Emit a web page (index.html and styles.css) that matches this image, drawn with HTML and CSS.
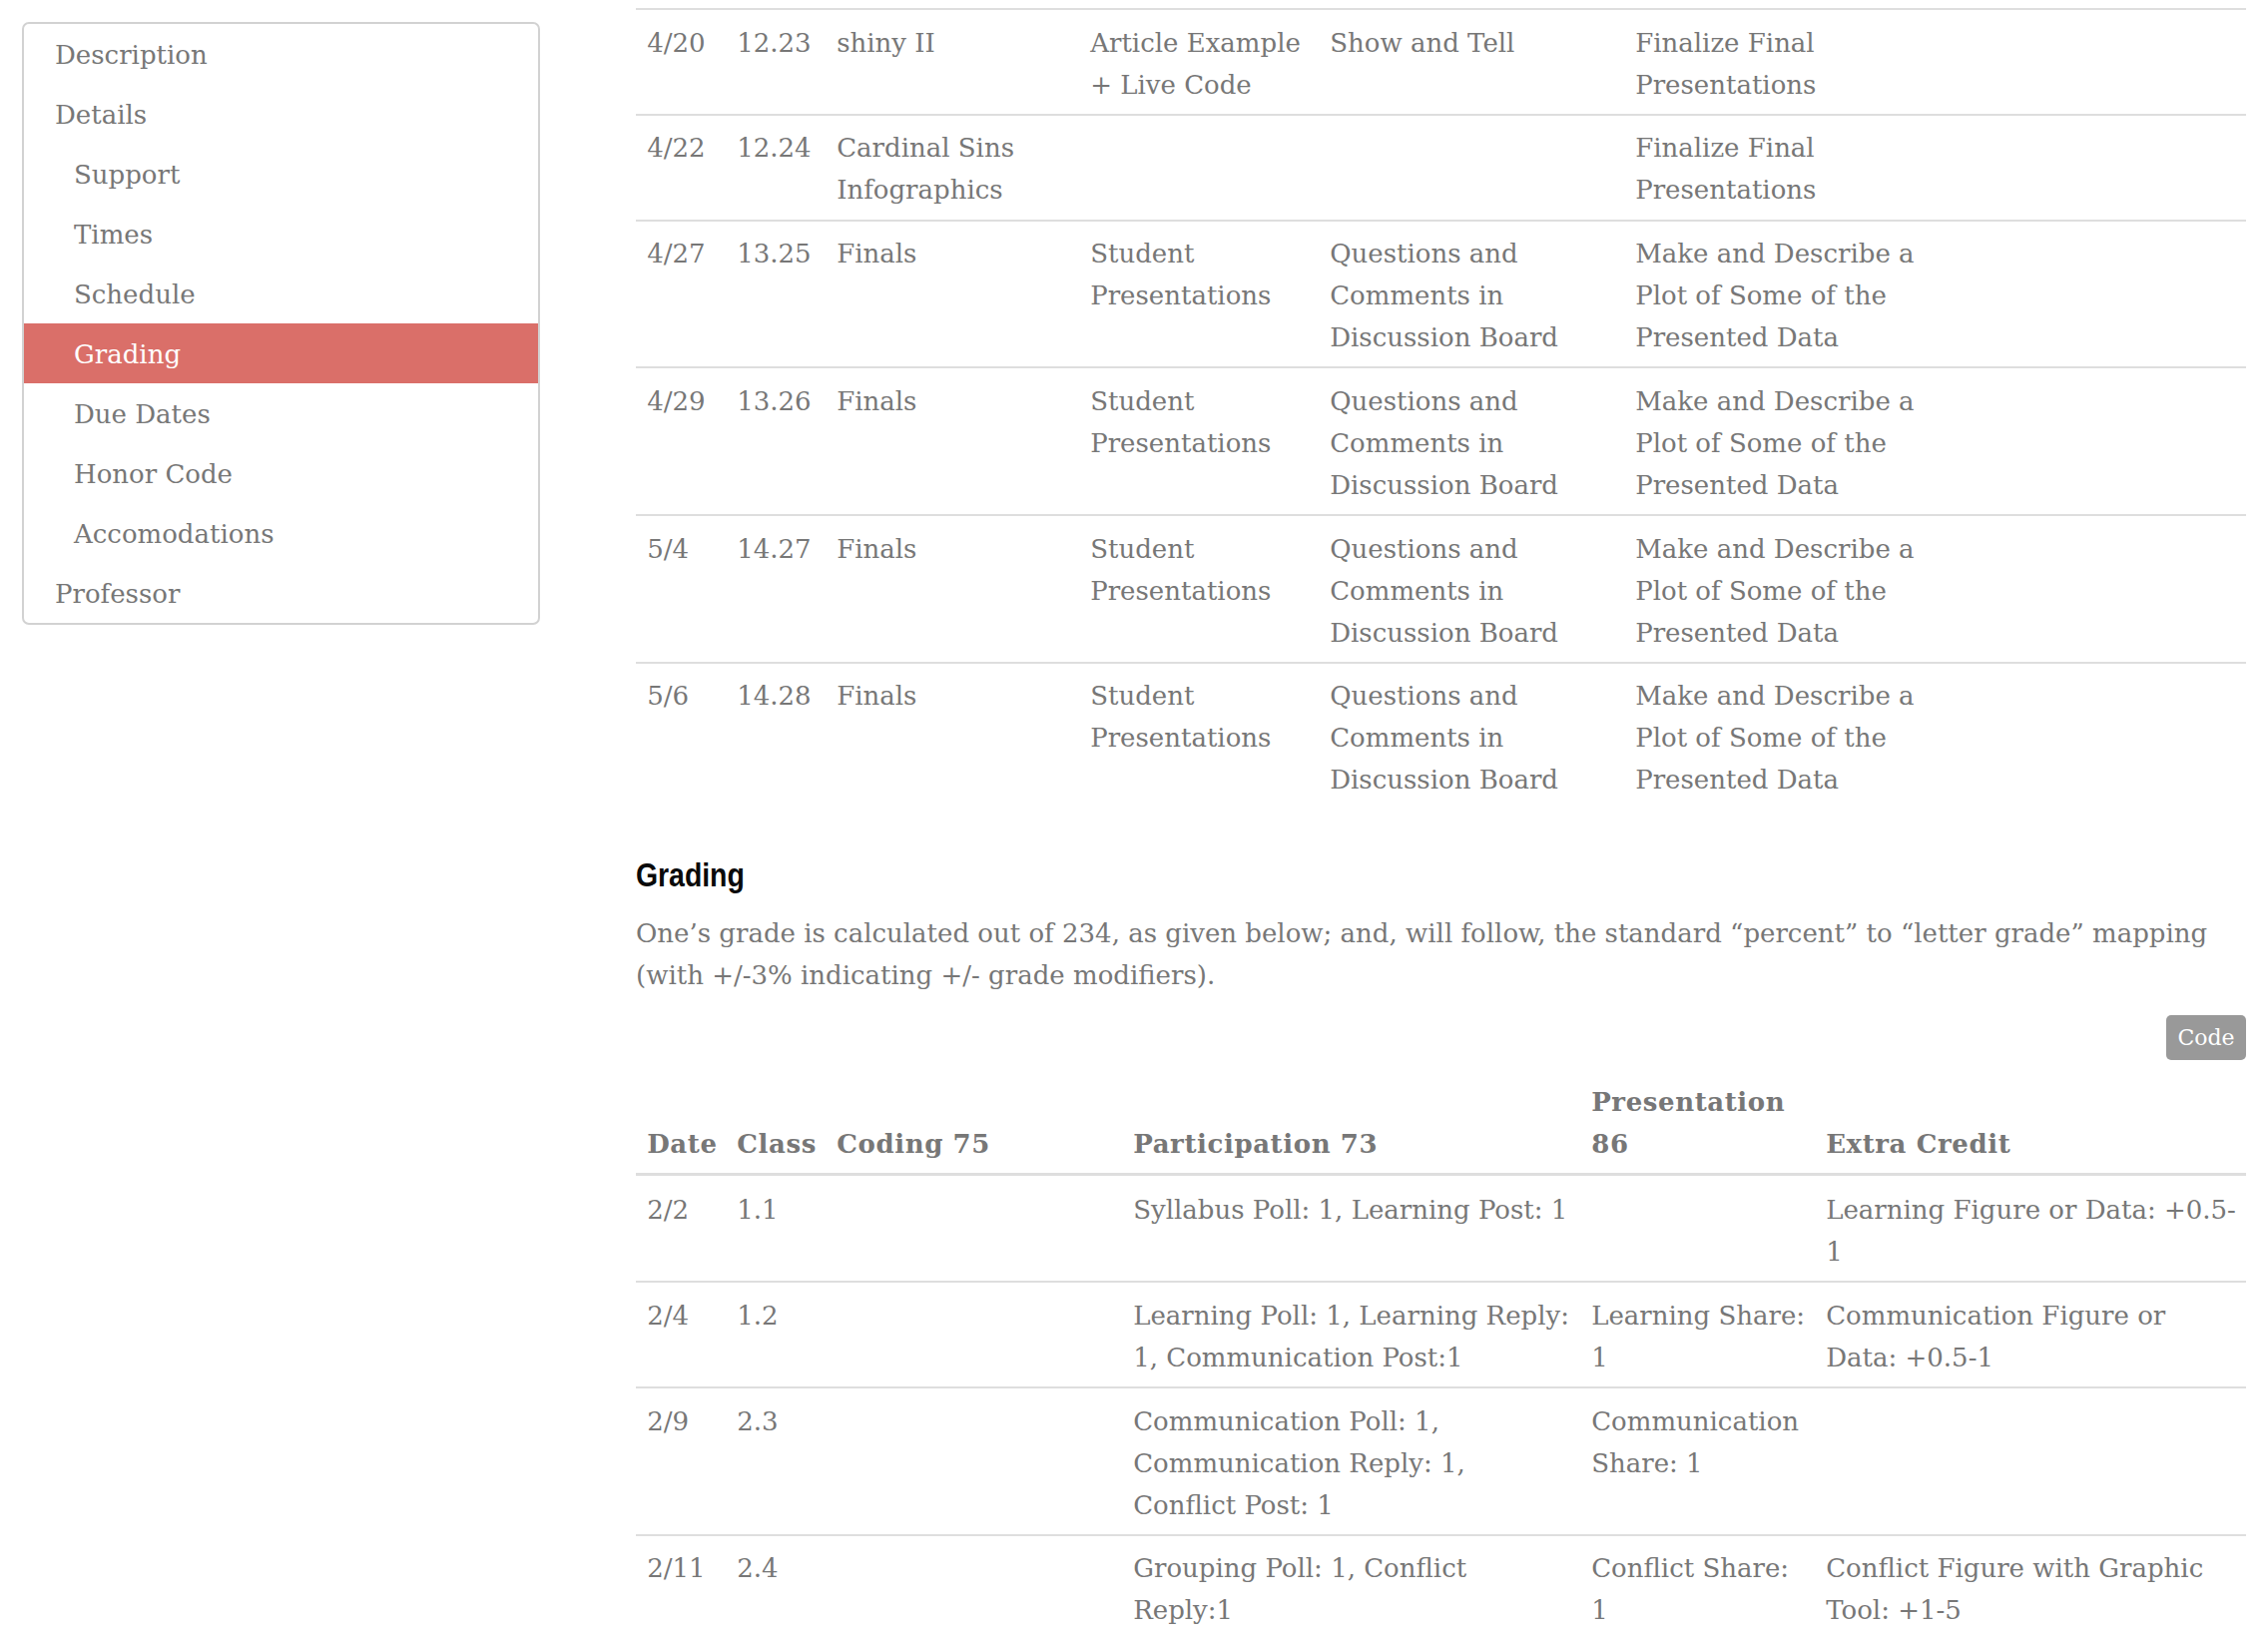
FILE: index.html
```html
<!DOCTYPE html>
<html lang="en">
<head>
<meta charset="utf-8">
<title>Syllabus - Grading</title>
<link rel="stylesheet" href="styles.css">
</head>
<body>
<div class="page">
  <nav class="toc">
    <ul class="toc-list">
      <li class="toc-item">Description</li>
      <li class="toc-item">Details</li>
      <li class="toc-item sub">Support</li>
      <li class="toc-item sub">Times</li>
      <li class="toc-item sub">Schedule</li>
      <li class="toc-item sub active">Grading</li>
      <li class="toc-item sub">Due Dates</li>
      <li class="toc-item sub">Honor Code</li>
      <li class="toc-item sub">Accomodations</li>
      <li class="toc-item">Professor</li>
    </ul>
  </nav>

  <main class="content">
    <table class="tbl schedule">
      <colgroup>
        <col class="c-date"><col class="c-class"><col class="c-topic"><col class="c-s4"><col class="c-s5"><col class="c-s6"><col class="c-s7">
      </colgroup>
      <tbody>
        <tr><td>4/20</td><td>12.23</td><td>shiny II</td><td>Article Example<br>+ Live Code</td><td>Show and Tell</td><td>Finalize Final<br>Presentations</td><td></td></tr>
        <tr><td>4/22</td><td>12.24</td><td>Cardinal Sins<br>Infographics</td><td></td><td></td><td>Finalize Final<br>Presentations</td><td></td></tr>
        <tr><td>4/27</td><td>13.25</td><td>Finals</td><td>Student<br>Presentations</td><td>Questions and<br>Comments in<br>Discussion Board</td><td>Make and Describe a<br>Plot of Some of the<br>Presented Data</td><td></td></tr>
        <tr><td>4/29</td><td>13.26</td><td>Finals</td><td>Student<br>Presentations</td><td>Questions and<br>Comments in<br>Discussion Board</td><td>Make and Describe a<br>Plot of Some of the<br>Presented Data</td><td></td></tr>
        <tr><td>5/4</td><td>14.27</td><td>Finals</td><td>Student<br>Presentations</td><td>Questions and<br>Comments in<br>Discussion Board</td><td>Make and Describe a<br>Plot of Some of the<br>Presented Data</td><td></td></tr>
        <tr><td>5/6</td><td>14.28</td><td>Finals</td><td>Student<br>Presentations</td><td>Questions and<br>Comments in<br>Discussion Board</td><td>Make and Describe a<br>Plot of Some of the<br>Presented Data</td><td></td></tr>
      </tbody>
    </table>

    <h3 class="section-title">Grading</h3>
    <p class="lead-text">One’s grade is calculated out of 234, as given below; and, will follow, the standard “percent” to “letter grade” mapping (with +/-3% indicating +/- grade modifiers).</p>

    <div class="code-row"><button class="code-btn" type="button">Code</button></div>

    <table class="tbl grading">
      <colgroup>
        <col class="c-date"><col class="c-class"><col class="c-coding"><col class="c-part"><col class="c-pres"><col class="c-extra">
      </colgroup>
      <thead>
        <tr><th>Date</th><th>Class</th><th>Coding 75</th><th>Participation 73</th><th>Presentation<br>86</th><th>Extra Credit</th></tr>
      </thead>
      <tbody>
        <tr><td>2/2</td><td>1.1</td><td></td><td>Syllabus Poll: 1, Learning Post: 1</td><td></td><td>Learning Figure or Data: +0.5-<br>1</td></tr>
        <tr><td>2/4</td><td>1.2</td><td></td><td>Learning Poll: 1, Learning Reply:<br>1, Communication Post:1</td><td>Learning Share:<br>1</td><td>Communication Figure or<br>Data: +0.5-1</td></tr>
        <tr><td>2/9</td><td>2.3</td><td></td><td>Communication Poll: 1,<br>Communication Reply: 1,<br>Conflict Post: 1</td><td>Communication<br>Share: 1</td><td></td></tr>
        <tr><td>2/11</td><td>2.4</td><td></td><td>Grouping Poll: 1, Conflict<br>Reply:1</td><td>Conflict Share:<br>1</td><td>Conflict Figure with Graphic<br>Tool: +1-5</td></tr>
      </tbody>
    </table>
  </main>
</div>
</body>
</html>
```

FILE: styles.css
```css
html, body {
  margin: 0;
  padding: 0;
  background: #ffffff;
}

body {
  font-family: "DejaVu Serif", "Liberation Serif", serif;
  font-size: 26px;
  line-height: 42px;
  color: #777777;
}

.page {
  display: flex;
  align-items: flex-start;
  padding: 0 22px;
}

/* ---------- sidebar ---------- */
.toc {
  flex: 0 0 519px;
  margin-top: 22px;
  border: 2px solid #d2d2d2;
  border-radius: 7px;
  box-sizing: border-box;
  overflow: hidden;
}

.toc-list {
  list-style: none;
  margin: 0;
  padding: 0;
}

.toc-item {
  height: 60px;
  line-height: 62px;
  padding-left: 31px;
  color: #777777;
  white-space: nowrap;
}

.toc-item.sub {
  padding-left: 50px;
}

.toc-item.active {
  background: #da6f69;
  color: #ffffff;
}

/* ---------- main ---------- */
.content {
  flex: 1 1 auto;
  margin-left: 96px;
  min-width: 0;
}

.tbl {
  width: 100%;
  border-collapse: collapse;
  table-layout: fixed;
}

.tbl td,
.tbl th {
  padding: 11.5px 11.2px 8.3px;
  vertical-align: top;
  text-align: left;
  white-space: nowrap;
  border-top: 2px solid #dedede;
}

.schedule {
  margin-top: 8px;
}

.c-date { width: 90px; }
.c-class { width: 100px; }
.c-topic { width: 254px; }
.c-s4 { width: 240px; }
.c-s5 { width: 306px; }
.c-s6 { width: 323px; }
.c-s7 { width: auto; }

.c-coding { width: 297px; }
.c-part { width: 459px; }
.c-pres { width: 235px; }
.c-extra { width: auto; }

.section-title {
  margin: 48px 0 0;
  font-family: "Liberation Sans", "Roboto", sans-serif;
  font-weight: 700;
  font-size: 33px;
  line-height: 36px;
  color: #0a0a0a;
  transform: scaleX(0.86);
  transform-origin: left center;
}

.lead-text {
  margin: 19.5px 0 0;
}

.code-row {
  display: flex;
  justify-content: flex-end;
  margin-top: 18.5px;
}

.code-btn {
  width: 80px;
  height: 45px;
  border: 0;
  border-radius: 5px;
  background: #999999;
  color: #ffffff;
  font-family: "DejaVu Serif", "Liberation Serif", serif;
  font-size: 22px;
  padding: 0;
}

.grading {
  margin-top: 9.5px;
}

.grading th {
  border-top: 0;
  border-bottom: 3px solid #dedede;
  vertical-align: bottom;
  font-weight: 700;
  letter-spacing: 0.6px;
}

.grading tbody tr:first-child td {
  border-top: 0;
  padding-top: 13px;
}
```
